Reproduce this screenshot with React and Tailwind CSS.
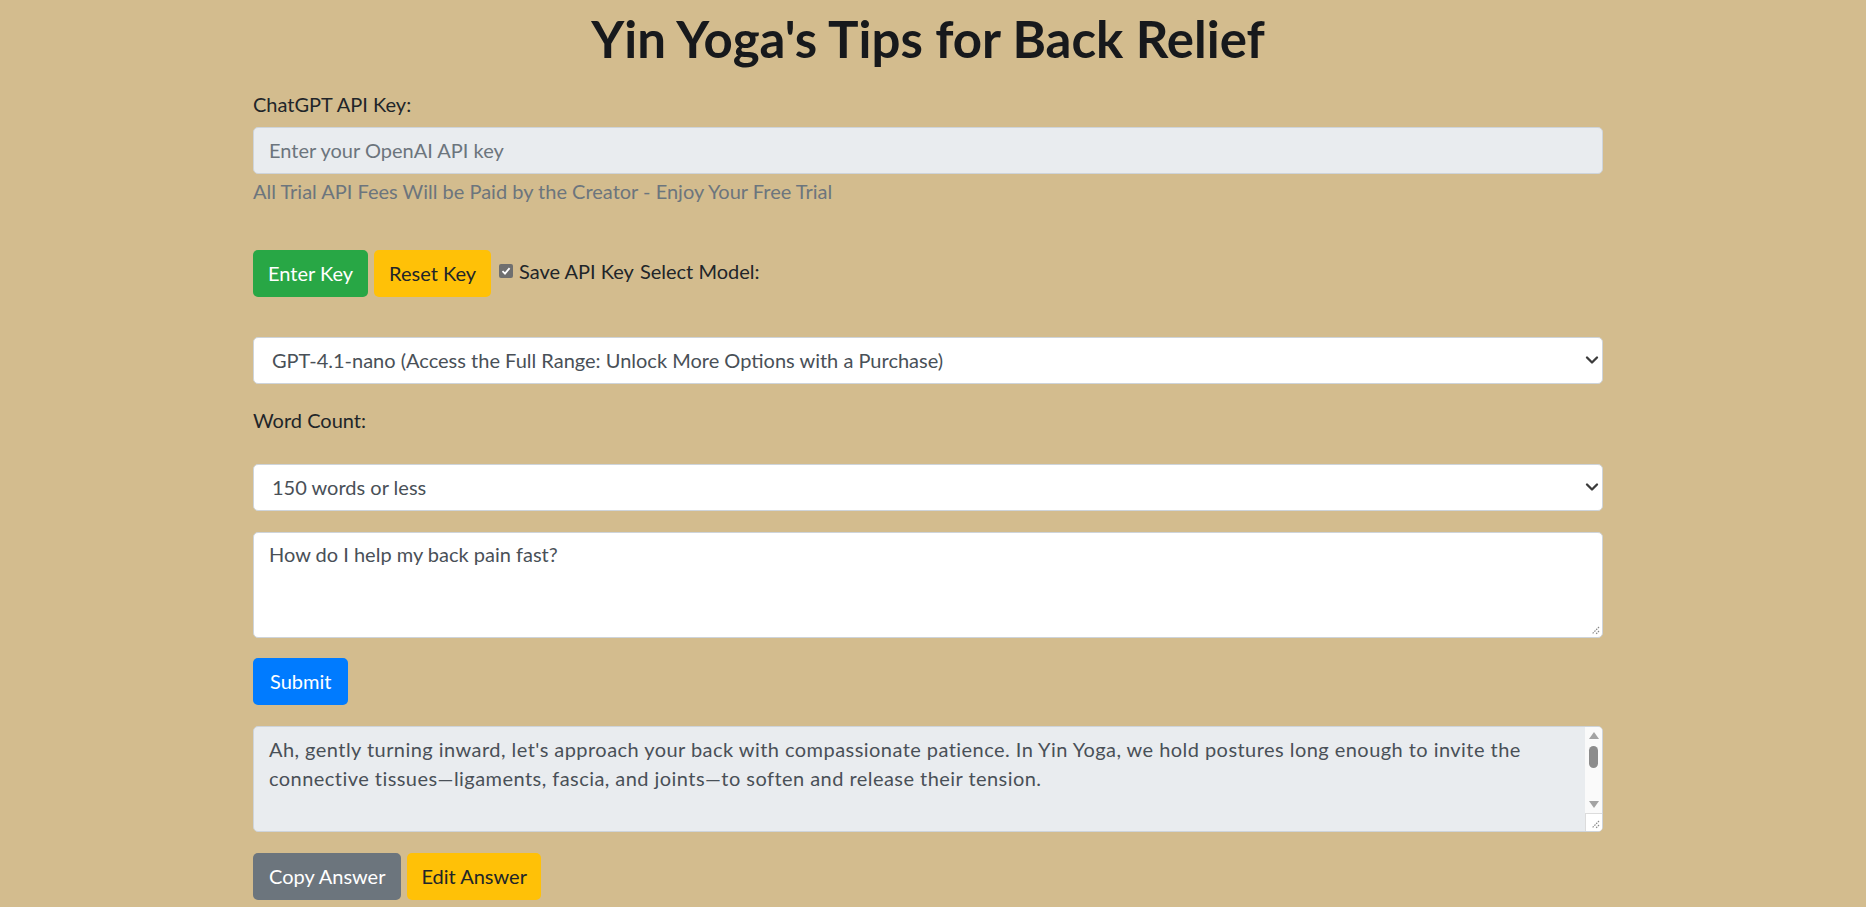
import React from 'react'
import { ChevronDown } from 'lucide-react'

function Grip({ className = '' }) {
  return (
    <svg width="9" height="9" viewBox="0 0 9 9" className={className}>
      <path d="M8 1 L1 8 M8 5 L5 8" stroke="#8a8a8a" strokeWidth="1.2" strokeDasharray="1.5 1" fill="none" />
    </svg>
  )
}

function Btn({ color, px = 'px-[15px]', children }) {
  return (
    <button
      type="button"
      className={`h-[47px] rounded-[5px] text-[20px] leading-[28.8px] ${px} ${color}`}
    >
      {children}
    </button>
  )
}

function Select({ value }) {
  return (
    <div className="relative h-[47px] rounded-[5px] border border-[#ced4da] bg-white">
      <div className="flex h-full items-center pl-[18px] text-[#495057]">{value}</div>
      <ChevronDown
        className="absolute right-[0px] top-[12px] text-[#3b3b3b]"
        size={20}
        strokeWidth={2.8}
      />
    </div>
  )
}

export default function App() {
  return (
    <div className="min-h-screen bg-[#d3bc8e] font-[Lato,'Noto_Sans',sans-serif] text-[20px] leading-[28.8px] text-[#212529]">
      <div className="ml-[253px] w-[1350px] pt-[9px] pb-[8px]">
        <h1 className="mb-[21px] text-center text-[51px] font-bold leading-[60px] text-[#17191c]">
          Yin Yoga's Tips for Back Relief
        </h1>

        <label className="mb-[8px] block">ChatGPT API Key:</label>
        <div className="flex h-[47px] items-center rounded-[5px] border border-[#ced4da] bg-[#e9ecef] px-[15px] text-[#6c757d]">
          Enter your OpenAI API key
        </div>
        <p className="mt-[3px] text-[#6c757d]">
          All Trial API Fees Will be Paid by the Creator - Enjoy Your Free Trial
        </p>

        <div className="mt-[44px] flex items-start gap-[6px]">
          <Btn color="bg-[#28a745] text-white">Enter Key</Btn>
          <Btn color="bg-[#ffc107] text-[#212529]">Reset Key</Btn>
          <div className="ml-[2px] mt-[7px] flex items-center gap-[6px]">
            <span className="flex h-[14px] w-[14px] items-center justify-center rounded-[2px] bg-[#6f6f6f]">
              <svg width="10" height="10" viewBox="0 0 10 10">
                <path d="M1.5 5.2 L4 7.7 L8.6 2.2" stroke="white" strokeWidth="1.8" fill="none" />
              </svg>
            </span>
            <span>Save API Key</span>
            <span>Select Model:</span>
          </div>
        </div>

        <div className="mt-[40px]">
          <Select value="GPT-4.1-nano (Access the Full Range: Unlock More Options with a Purchase)" />
        </div>

        <label className="mt-[22px] block">Word Count:</label>
        <div className="mt-[30px]">
          <Select value="150 words or less" />
        </div>

        <div className="relative mt-[21px] h-[106px] rounded-[5px] border border-[#ced4da] bg-white px-[15px] py-[7px] text-[#495057]">
          How do I help my back pain fast?
          <Grip className="absolute bottom-[2px] right-[2px]" />
        </div>

        <div className="mt-[20px]">
          <Btn color="bg-[#007bff] text-white" px="px-[17px]">Submit</Btn>
        </div>

        <div className="mt-[21px] flex h-[106px] overflow-hidden rounded-[5px] border border-[#ced4da] bg-[#e9ecef]">
          <div className="flex-1 py-[8px] pl-[15px] pr-[40px] tracking-[0.45px] text-[#495057]">
            Ah, gently turning inward, let's approach your back with compassionate patience. In Yin Yoga, we hold postures long enough to invite the connective tissues—ligaments, fascia, and joints—to soften and release their tension.
          </div>
          <div className="flex w-[17px] flex-col bg-[#fafafa]">
            <div className="flex h-[17px] items-center justify-center">
              <svg width="10" height="7" viewBox="0 0 10 7"><path d="M5 0 L10 7 L0 7 Z" fill="#a3a3a3" /></svg>
            </div>
            <div className="mx-auto mt-[2px] h-[22px] w-[9px] rounded-full bg-[#8c8c8c]" />
            <div className="flex-1" />
            <div className="flex h-[17px] items-center justify-center">
              <svg width="10" height="7" viewBox="0 0 10 7"><path d="M0 0 L10 0 L5 7 Z" fill="#a3a3a3" /></svg>
            </div>
            <div className="relative h-[18px] border-t border-l border-[#dcdcdc] bg-white">
              <Grip className="absolute bottom-[2px] right-[2px]" />
            </div>
          </div>
        </div>

        <div className="mt-[21px] flex gap-[6px]">
          <Btn color="bg-[#6c757d] text-white" px="px-[16px]">Copy Answer</Btn>
          <Btn color="bg-[#ffc107] text-[#212529]" px="px-[14px]">Edit Answer</Btn>
        </div>
      </div>
    </div>
  )
}
